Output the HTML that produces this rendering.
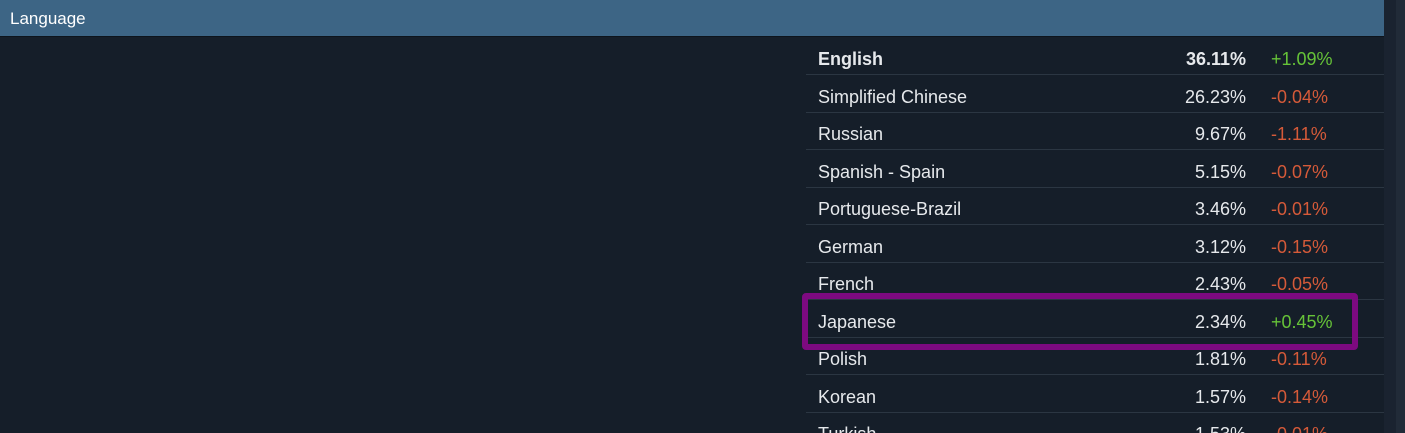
<!DOCTYPE html><html><head><style>
html,body{margin:0;width:1405px;height:433px;overflow:hidden}
body{background:#151e29;font-family:"Liberation Sans",sans-serif;position:relative}
.hd{position:absolute;left:0;top:0;width:1384px;height:36px;background:#3d6585;border-bottom:1px solid #0d141c;color:#fff;font-size:17px;line-height:38px;text-indent:10px}
.sb{position:absolute;left:1384px;top:0;width:21px;height:433px;background:#1a2330}
.sb2{position:absolute;left:1396px;top:0;width:9px;height:433px;background:#212b38}
.row{position:absolute;left:806px;width:578px;height:36px;border-bottom:1.5px solid #2b3642;color:#e6e9ec;font-size:18px}
.row span{position:absolute;top:11px}
.n{left:12px}.p{right:138px}.c{left:465px}
.g{color:#66c338}.r{color:#d55a39}
.box{position:absolute;left:802px;top:293px;width:544px;height:45px;border:6px solid #7d0a80;border-radius:4px}
</style></head><body>
<div class="hd">Language</div>
<div class="sb"></div><div class="sb2"></div>
<div class="row" style="top:38px;font-weight:bold"><span class="n">English</span><span class="p">36.11%</span><span class="c g" style="font-weight:normal">+1.09%</span></div>
<div class="row" style="top:75.5px"><span class="n">Simplified Chinese</span><span class="p">26.23%</span><span class="c r">-0.04%</span></div>
<div class="row" style="top:113px"><span class="n">Russian</span><span class="p">9.67%</span><span class="c r">-1.11%</span></div>
<div class="row" style="top:150.5px"><span class="n">Spanish - Spain</span><span class="p">5.15%</span><span class="c r">-0.07%</span></div>
<div class="row" style="top:188px"><span class="n">Portuguese-Brazil</span><span class="p">3.46%</span><span class="c r">-0.01%</span></div>
<div class="row" style="top:225.5px"><span class="n">German</span><span class="p">3.12%</span><span class="c r">-0.15%</span></div>
<div class="row" style="top:263px"><span class="n">French</span><span class="p">2.43%</span><span class="c r">-0.05%</span></div>
<div class="row" style="top:300.5px"><span class="n">Japanese</span><span class="p">2.34%</span><span class="c g">+0.45%</span></div>
<div class="row" style="top:338px"><span class="n">Polish</span><span class="p">1.81%</span><span class="c r">-0.11%</span></div>
<div class="row" style="top:375.5px"><span class="n">Korean</span><span class="p">1.57%</span><span class="c r">-0.14%</span></div>
<div class="row" style="top:413px"><span class="n">Turkish</span><span class="p">1.53%</span><span class="c r">-0.01%</span></div>
<div class="box"></div>
</body></html>
